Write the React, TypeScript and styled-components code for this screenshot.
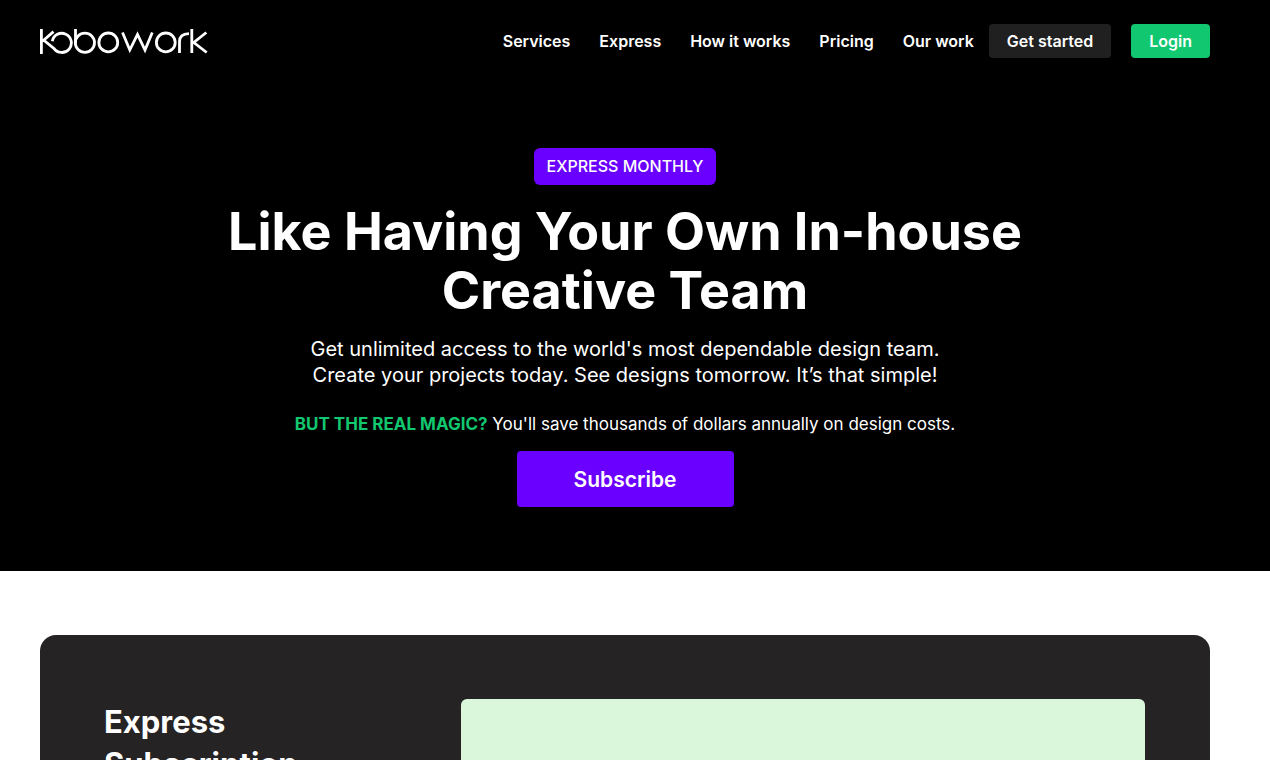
import React from 'react';
import styled, { createGlobalStyle } from 'styled-components';

const GlobalStyle = createGlobalStyle`
  *, *::before, *::after { box-sizing: border-box; }
  body {
    margin: 0;
    background: #fff;
    color: #fff;
    font-family: Inter, "Liberation Sans", sans-serif;
    overflow-x: hidden;
  }
  h1, h2, p { margin: 0; }
`;

const Top = styled.div`
  background: #000;
  padding: 24px 60px 64px 40px;
`;

const Header = styled.header`
  display: flex;
  align-items: center;
  justify-content: space-between;
`;

const LogoLink = styled.a`
  display: block;
  line-height: 0;
`;

const Nav = styled.nav`
  display: flex;
  align-items: center;
`;

const NavLinks = styled.div`
  display: flex;
  gap: 29px;
  margin-right: 15px;
`;

const NavLink = styled.a`
  color: #fff;
  font-size: 16px;
  font-weight: 600;
  line-height: 24px;
  text-decoration: none;
  white-space: nowrap;
`;

const NavButton = styled.button<{ $accent?: boolean }>`
  height: 34px;
  padding: 0 18px;
  border: 0;
  border-radius: 4px;
  background: ${(p) => (p.$accent ? '#11c76f' : '#202020')};
  color: #fff;
  font: inherit;
  font-size: 16px;
  font-weight: 600;
  white-space: nowrap;
  & + & { margin-left: 20px; }
`;

const Hero = styled.section`
  display: flex;
  flex-direction: column;
  align-items: center;
  margin-top: 90px;
  text-align: center;
`;

const Badge = styled.p`
  padding: 0 13px;
  border-radius: 6px;
  background: #6a00ff;
  font-size: 16px;
  font-weight: 500;
  line-height: 37px;
`;

const Title = styled.h1`
  max-width: 840px;
  margin-top: 17px;
  font-size: 52px;
  font-weight: 700;
  line-height: 59px;
`;

const Lead = styled.p`
  margin-top: 16px;
  font-size: 20px;
  line-height: 26px;
`;

const Magic = styled.p`
  margin-top: 22px;
  font-size: 17px;
  line-height: 28px;
`;

const Accent = styled.strong`
  color: #11c76f;
  font-weight: 700;
`;

const Subscribe = styled.button`
  min-width: 217px;
  height: 56px;
  margin-top: 13px;
  border: 0;
  border-radius: 4px;
  background: #6a00ff;
  color: #fff;
  font: inherit;
  font-size: 21px;
  font-weight: 600;
`;

const Plans = styled.main`
  padding: 64px 60px 64px 40px;
`;

const PlanCard = styled.section`
  display: grid;
  grid-template-columns: 293px 1fr;
  gap: 64px;
  padding: 64px 65px 64px 64px;
  border-radius: 16px;
  background: #252324;
`;

const PlanTitle = styled.h2`
  max-width: 240px;
  margin-top: 2px;
  font-size: 31px;
  font-weight: 700;
  line-height: 42px;
`;

const PlanPanel = styled.div`
  min-height: 320px;
  border-radius: 6px;
  background: #daf6db;
`;

const Logo = () => (
  <svg width="168" height="26" viewBox="0 0 168 26" fill="none" stroke="#fff" strokeWidth="2.8" aria-hidden="true">
    <path d="M1.4 1v25M2.500 13.200 13.500 3.600" />
    <path d="M3.500 12 13.900 20.400A9.600 9.600 0 1 0 12.300 13.200" />
    <path d="M35.500 1v14" />
    <circle cx="44.900" cy="14.800" r="9.600" />
    <circle cx="68.300" cy="14.400" r="9.400" />
    <path d="M82.500 4.500 89.800 22 97.500 6.500 105 22 112.300 4.500" />
    <circle cx="125.800" cy="14.400" r="9.400" />
    <path d="M139.500 25V13.500Q139.500 6 149 5.600M151.800 1v24M166.300 4.500 153.800 14.500 166.700 24.500" />
  </svg>
);

const links = ['Services', 'Express', 'How it works', 'Pricing', 'Our work'];

export default function App() {
  return (
    <>
      <GlobalStyle />
      <Top>
        <Header>
          <LogoLink href="#" aria-label="Kobowork"><Logo /></LogoLink>
          <Nav>
            <NavLinks>
              {links.map((label) => <NavLink href="#" key={label}>{label}</NavLink>)}
            </NavLinks>
            <NavButton type="button">Get started</NavButton>
            <NavButton type="button" $accent>Login</NavButton>
          </Nav>
        </Header>
        <Hero>
          <Badge>EXPRESS MONTHLY</Badge>
          <Title>Like Having Your Own In-house Creative Team</Title>
          <Lead>
            Get unlimited access to the world's most dependable design team.<br />
            Create your projects today. See designs tomorrow. It’s that simple!
          </Lead>
          <Magic>
            <Accent>BUT THE REAL MAGIC?</Accent> You'll save thousands of dollars annually on design costs.
          </Magic>
          <Subscribe type="button">Subscribe</Subscribe>
        </Hero>
      </Top>
      <Plans>
        <PlanCard>
          <PlanTitle>Express Subscription</PlanTitle>
          <PlanPanel />
        </PlanCard>
      </Plans>
    </>
  );
}
